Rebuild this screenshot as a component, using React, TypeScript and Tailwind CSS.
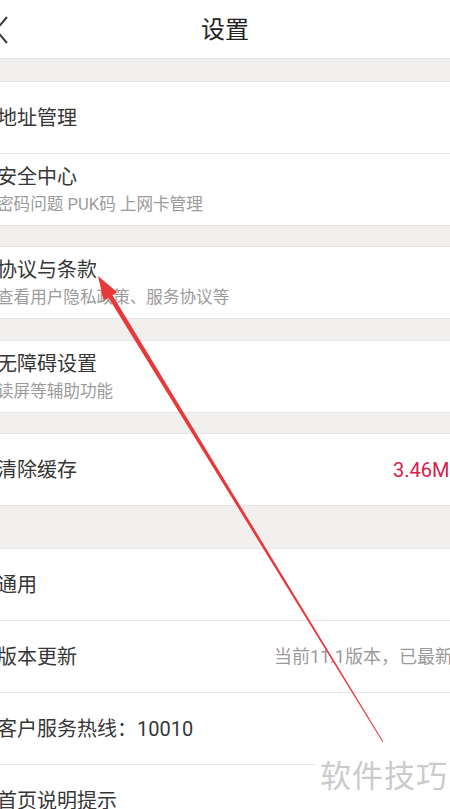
import type { ReactNode } from 'react';

interface RowProps {
  title: string;
  sub?: string;
  right?: ReactNode;
  divider?: boolean;
}

function Row({ title, sub, right, divider }: RowProps) {
  return (
    <div
      className={`flex h-[71px] items-center bg-white pr-[3px] ${
        divider ? 'box-content border-b border-[#e6e6e6]' : ''
      }`}
    >
      <div className="flex min-w-0 flex-1 flex-col">
        <span className="text-[20px] leading-[26px] text-[#373737] whitespace-nowrap">{title}</span>
        {sub && (
          <span className="mt-[5px] text-[16.6px] leading-[20px] text-[#9b9b9b] whitespace-nowrap">{sub}</span>
        )}
      </div>
      {right}
    </div>
  );
}

function Gap({ h }: { h: string }) {
  return <div className={`${h} border-y border-[#e8e6e5] bg-[#f2f0ef]`} />;
}

export default function App() {
  return (
    <div
      className="relative h-[809px] w-[450px] overflow-hidden bg-white"
      style={{ fontFamily: "Roboto, 'Noto Sans CJK SC', sans-serif" }}
    >
      {/* Header */}
      <div className="relative flex h-[58px] items-center justify-center bg-white">
        <svg
          className="absolute left-[-6px] top-[16px]"
          width="16"
          height="28"
          viewBox="0 0 16 28"
          fill="none"
          stroke="#3a3a3a"
          strokeWidth="2"
        >
          <path d="M13 1 L2 14 L13 27" />
        </svg>
        <span className="mt-[2px] text-[24px] leading-none text-[#222]">设置</span>
      </div>

      <div className="-ml-[3px] w-[468px]">
        <Gap h="h-[24px]" />
        <Row title="地址管理" divider />
        <Row title="安全中心" sub="密码问题 PUK码 上网卡管理" />
        <Gap h="h-[22px]" />
        <Row title="协议与条款" sub="查看用户隐私政策、服务协议等" />
        <Gap h="h-[23px]" />
        <Row title="无障碍设置" sub="读屏等辅助功能" />
        <Gap h="h-[22px]" />
        <Row
          title="清除缓存"
          right={<span className="text-[20px] text-[#d6204c] whitespace-nowrap">3.46MB</span>}
        />
        <Gap h="h-[44px]" />
        <Row title="通用" divider />
        <Row
          title="版本更新"
          divider
          right={
            <span className="mr-[9px] text-[18px] text-[#9b9b9b] whitespace-nowrap">
              当前11.1版本，已最新
            </span>
          }
        />
        <Row title="客户服务热线：10010" divider />
        <Row title="首页说明提示" />
      </div>

      {/* Watermark */}
      <div className="absolute left-[315px] top-[752px] flex h-[48px] w-[135px] items-center bg-white pl-[5px]">
        <span className="text-[31px] leading-none tracking-[1px] text-[#cbcbcb]">软件技巧</span>
      </div>

      {/* Annotation arrow */}
      <svg className="pointer-events-none absolute left-0 top-0" width="450" height="809">
        <polygon
          fill="#e8383a"
          points="98,276 117.3,292.3 112.5,295.3 383.4,741.7 382.6,742.3 108.5,297.7 103.7,300.7"
        />
      </svg>
    </div>
  );
}
